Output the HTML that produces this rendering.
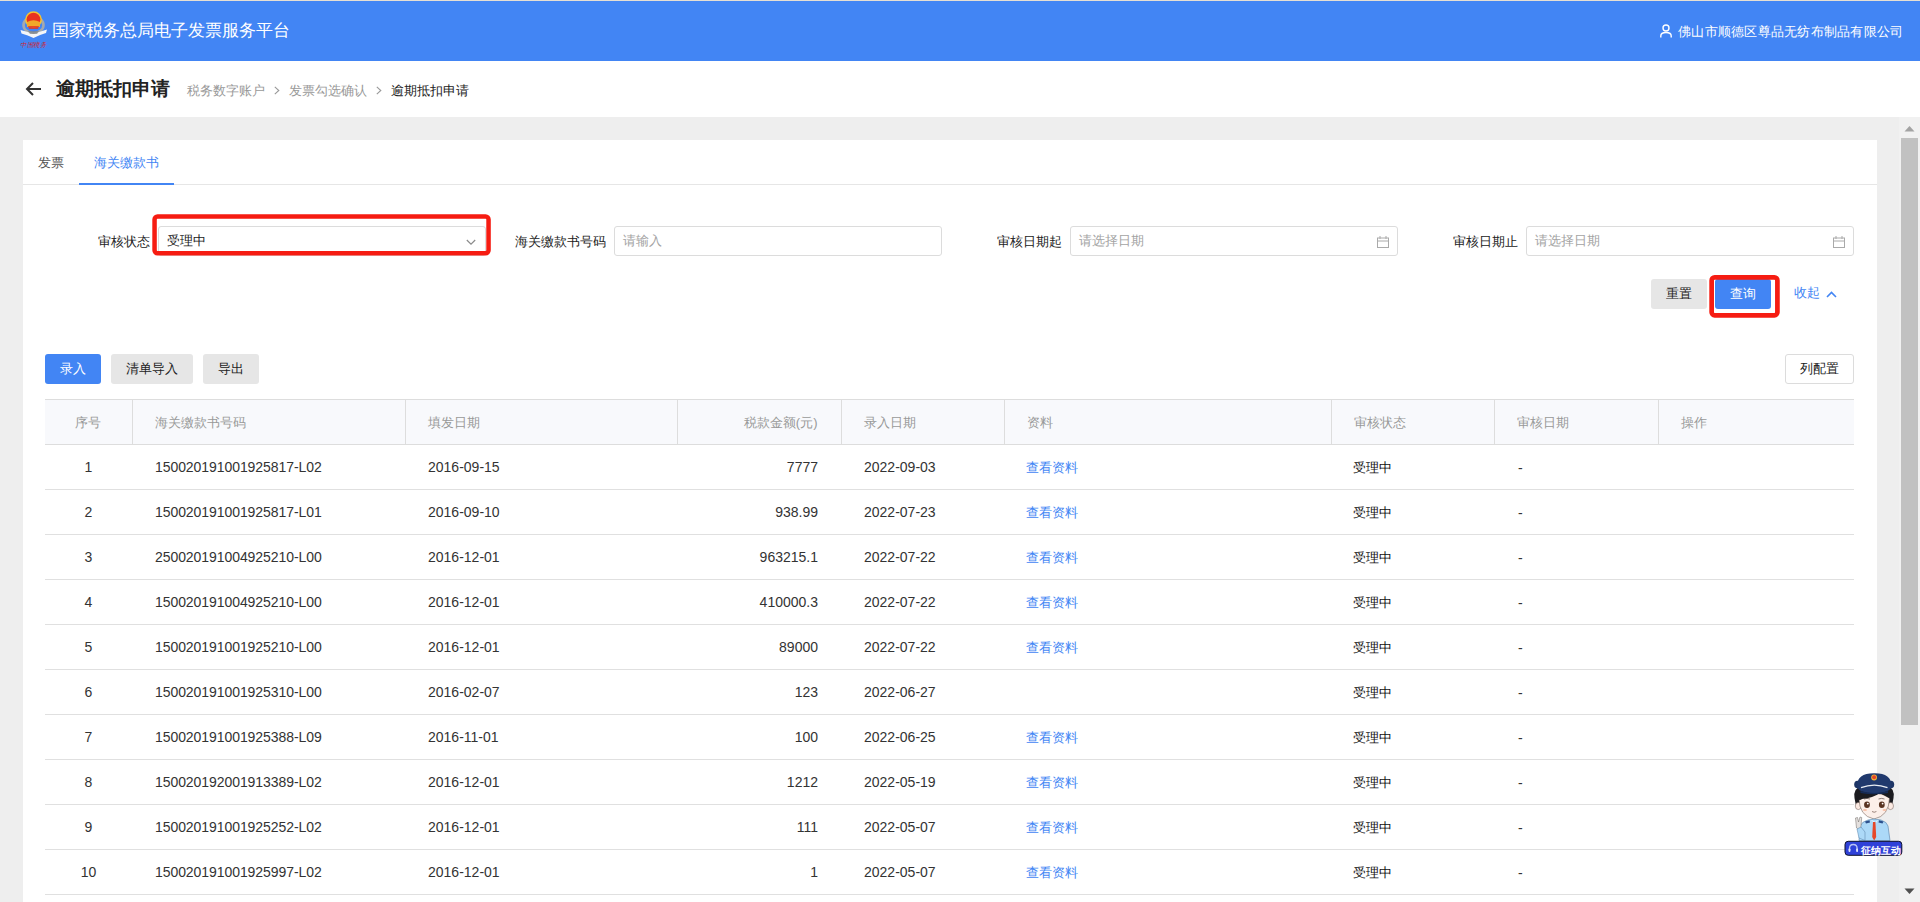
<!DOCTYPE html>
<html><head><meta charset="utf-8">
<style>
*{box-sizing:border-box;margin:0;padding:0}
html,body{width:1920px;height:902px;overflow:hidden}
body{position:relative;background:#eeeeee;font-family:"Liberation Sans",sans-serif;font-size:13px;color:#333}
.abs{position:absolute}
#topline{left:0;top:0;width:1920px;height:1px;background:#e6dfd3}
#header{left:0;top:1px;width:1920px;height:60px;background:#4285f4;color:#fff}
#logo{left:19px;top:8px;width:30px;height:40px}
#sitetitle{left:52px;top:19px;font-size:17px;line-height:22px;white-space:nowrap}
#user{left:1660px;top:22px;font-size:13px;line-height:18px;white-space:nowrap;letter-spacing:0.25px}
#crumbbar{left:0;top:61px;width:1920px;height:56px;background:#fff}
#back{left:25px;top:80px}
#pagetitle{left:56px;top:77px;font-size:19px;font-weight:bold;line-height:24px;color:#222;white-space:nowrap}
#crumbs{left:187px;top:82px;font-size:13px;line-height:18px;color:#999;white-space:nowrap}
#crumbs .sep{display:inline-block;width:24px;text-align:center;vertical-align:top;padding-top:4px;line-height:9px}
#crumbs .cur{color:#222}
#scroll{left:1899px;top:117px;width:21px;height:785px;background:#f1f1f1}
#thumb{left:1901px;top:138px;width:17px;height:587px;background:#c1c1c1}
#card{left:23px;top:140px;width:1854px;height:800px;background:#fff}
#tabs{left:23px;top:140px;width:1854px;height:45px;border-bottom:1px solid #e6e6e6}
.tab{position:absolute;top:0;height:45px;line-height:46px;padding:0 15px;font-size:13px;color:#555}
.tab.active{color:#4285f4}
.tab.active:after{content:"";position:absolute;left:0;right:0;bottom:0;height:2px;background:#4285f4}
.flabel{position:absolute;top:233px;width:120px;text-align:right;font-size:13px;line-height:18px;color:#222;white-space:nowrap}
.finput{position:absolute;top:226px;width:328px;height:30px;border:1px solid #dcdcdc;border-radius:3px;background:#fff;font-size:13px;line-height:28px;padding-left:8px;color:#a3a3a3;white-space:nowrap}
.finput.val{color:#222}
.redbox{position:absolute;border:4px solid #f5201a;border-radius:5px}
.btn{position:absolute;height:30px;line-height:30px;border-radius:3px;font-size:13px;font-weight:500;text-align:center;white-space:nowrap}
.btn.grey{background:#e6e6e6;color:#222}
.btn.blue{background:#4285f4;color:#fff}
.btn.outline{background:#fff;border:1px solid #dcdcdc;line-height:28px;color:#222}
#table{left:45px;top:399px;width:1809px;border-collapse:collapse;table-layout:fixed}
#table th{height:45px;background:#f8f9fc;color:#999;font-weight:normal;text-align:left;font-size:13px;border-top:1px solid #ddd;border-bottom:1px solid #ddd;border-left:1px solid #ddd;padding:2px 0 0 22px}
#table th:first-child{border-left:none;text-align:center;padding:2px 0 0 0}
#table td{height:45px;border-bottom:1px solid #e0e0e0;font-size:14px;color:#333;padding:0 0 0 23px;white-space:nowrap}
#table td:first-child{text-align:center;padding:0}
#table td:nth-child(2){letter-spacing:-0.07px}
#table th.r{text-align:right;padding:2px 23px 0 0}
#table td.r{text-align:right;padding:0 23px 0 0}
#table td.link{color:#4285f4;font-size:13px;padding-top:2px;padding-left:22px}
#table td.dash{padding-left:24px;padding-top:1px}
#table td.cn{color:#111;font-size:13px;padding-top:2px;padding-left:22px}
</style></head><body>
<div id="topline" class="abs"></div>
<div id="header" class="abs">
  <div id="logo" class="abs">
    <svg width="30" height="40" viewBox="0 0 30 40">
      <path d="M4.5 12 Q3 20 8 24 L21 24 Q26 20 24.5 12 Q26 22 14.5 25 Q3 22 4.5 12 Z" fill="#8f969c"/>
      <ellipse cx="14.5" cy="16" rx="10" ry="8.2" fill="none" stroke="#a4a9ad" stroke-width="2.6"/>
      <circle cx="14.5" cy="10.6" r="8.4" fill="#f4c430"/>
      <circle cx="14.5" cy="10.6" r="6.9" fill="#e8321f"/>
      <path d="M8 13 Q14.5 9.5 21 13 L21 18 L8 18 Z" fill="#f1a82a"/>
      <path d="M9 17 L20 17 L19 20 L10 20 Z" fill="#e8321f" opacity=".8"/>
      <path d="M1.5 21 Q8 22.5 14.5 25 Q21 22.5 28 20.5 L27 24 Q20 26 14.5 29 Q9 26 2.5 24.5 Z" fill="#f4f6f8"/>
      <path d="M9 22 L20 22 L18 25 L11 25 Z" fill="#7d8489" opacity=".7"/>
      <text x="14.5" y="37.5" font-size="6.5" fill="#d4202a" text-anchor="middle" font-style="italic" letter-spacing="-0.3">中国税务</text>
    </svg>
  </div>
  <div id="sitetitle" class="abs">国家税务总局电子发票服务平台</div>
  <div id="user" class="abs"><svg width="12" height="14" viewBox="0 0 12 14" style="vertical-align:-2px;margin-right:6px"><circle cx="6" cy="4" r="3" fill="none" stroke="#fff" stroke-width="1.4"/><path d="M0.8 13.5 V12 Q0.8 8.5 6 8.5 Q11.2 8.5 11.2 12 V13.5" fill="none" stroke="#fff" stroke-width="1.4"/></svg>佛山市顺德区尊品无纺布制品有限公司</div>
</div>
<div id="crumbbar" class="abs"></div>
<div id="back" class="abs"><svg width="18" height="18" viewBox="0 0 18 18"><path d="M2 9 H16 M8 3 L2 9 L8 15" fill="none" stroke="#333" stroke-width="2"/></svg></div>
<div id="pagetitle" class="abs">逾期抵扣申请</div>
<div id="crumbs" class="abs">税务数字账户<span class="sep"><svg width="6" height="9" viewBox="0 0 6 9"><path d="M0.8 0.8 L4.8 4.5 L0.8 8.2" fill="none" stroke="#999" stroke-width="1.1"/></svg></span>发票勾选确认<span class="sep"><svg width="6" height="9" viewBox="0 0 6 9"><path d="M0.8 0.8 L4.8 4.5 L0.8 8.2" fill="none" stroke="#999" stroke-width="1.1"/></svg></span><span class="cur">逾期抵扣申请</span></div>

<div id="card" class="abs"></div>
<div id="tabs" class="abs">
  <div class="tab" style="left:0">发票</div>
  <div class="tab active" style="left:56px">海关缴款书</div>
</div>

<div class="flabel" style="left:30px">审核状态</div>
<div class="finput val" style="left:158px">受理中<svg width="10" height="7" viewBox="0 0 10 7" style="position:absolute;right:9px;top:12px"><path d="M0.8 1 L5 5.2 L9.2 1" fill="none" stroke="#8a8a8a" stroke-width="1.15"/></svg></div>
<svg class="abs" style="left:140px;top:200px" width="370" height="70"><rect x="14.55" y="16.45" width="334" height="36.9" rx="3" fill="none" stroke="#f61c12" stroke-width="4.5"/></svg>

<div class="flabel" style="left:486px">海关缴款书号码</div>
<div class="finput" style="left:614px">请输入</div>

<div class="flabel" style="left:942px">审核日期起</div>
<div class="finput" style="left:1070px">请选择日期<svg width="12" height="12" viewBox="0 0 12 12" style="position:absolute;right:8px;top:9px"><rect x="0.5" y="2" width="11" height="9.5" fill="none" stroke="#aaa"/><path d="M0.5 5 H11.5 M3 0 V3 M9 0 V3" stroke="#aaa"/></svg></div>

<div class="flabel" style="left:1398px">审核日期止</div>
<div class="finput" style="left:1526px">请选择日期<svg width="12" height="12" viewBox="0 0 12 12" style="position:absolute;right:8px;top:9px"><rect x="0.5" y="2" width="11" height="9.5" fill="none" stroke="#aaa"/><path d="M0.5 5 H11.5 M3 0 V3 M9 0 V3" stroke="#aaa"/></svg></div>

<div class="btn grey" style="left:1651px;top:279px;width:56px">重置</div>
<div class="btn blue" style="left:1715px;top:279px;width:56px">查询</div>
<svg class="abs" style="left:1700px;top:265px" width="90" height="60"><rect x="11.65" y="12.4" width="65.75" height="37.9" rx="3" fill="none" stroke="#f61c12" stroke-width="4.7"/></svg>
<div class="abs" style="left:1794px;top:284px;font-size:13px;line-height:18px;color:#4285f4;white-space:nowrap">收起<svg width="11" height="7" viewBox="0 0 11 7" style="margin-left:6px;vertical-align:-1px"><path d="M1 6 L5.5 1.5 L10 6" fill="none" stroke="#4285f4" stroke-width="1.6"/></svg></div>

<div class="btn blue" style="left:45px;top:354px;width:56px">录入</div>
<div class="btn grey" style="left:111px;top:354px;width:82px">清单导入</div>
<div class="btn grey" style="left:203px;top:354px;width:56px">导出</div>
<div class="btn outline" style="left:1785px;top:354px;width:69px">列配置</div>

<table id="table" class="abs">
<colgroup><col style="width:87px"><col style="width:273px"><col style="width:272px"><col style="width:164px"><col style="width:163px"><col style="width:327px"><col style="width:163px"><col style="width:164px"><col style="width:196px"></colgroup>
<thead><tr><th>序号</th><th>海关缴款书号码</th><th>填发日期</th><th class="r">税款金额(元)</th><th>录入日期</th><th>资料</th><th>审核状态</th><th>审核日期</th><th>操作</th></tr></thead>
<tbody>
<tr><td>1</td><td>150020191001925817-L02</td><td>2016-09-15</td><td class="r">7777</td><td>2022-09-03</td><td class="link">查看资料</td><td class="cn">受理中</td><td class="dash">-</td><td></td></tr>
<tr><td>2</td><td>150020191001925817-L01</td><td>2016-09-10</td><td class="r">938.99</td><td>2022-07-23</td><td class="link">查看资料</td><td class="cn">受理中</td><td class="dash">-</td><td></td></tr>
<tr><td>3</td><td>250020191004925210-L00</td><td>2016-12-01</td><td class="r">963215.1</td><td>2022-07-22</td><td class="link">查看资料</td><td class="cn">受理中</td><td class="dash">-</td><td></td></tr>
<tr><td>4</td><td>150020191004925210-L00</td><td>2016-12-01</td><td class="r">410000.3</td><td>2022-07-22</td><td class="link">查看资料</td><td class="cn">受理中</td><td class="dash">-</td><td></td></tr>
<tr><td>5</td><td>150020191001925210-L00</td><td>2016-12-01</td><td class="r">89000</td><td>2022-07-22</td><td class="link">查看资料</td><td class="cn">受理中</td><td class="dash">-</td><td></td></tr>
<tr><td>6</td><td>150020191001925310-L00</td><td>2016-02-07</td><td class="r">123</td><td>2022-06-27</td><td class="link"></td><td class="cn">受理中</td><td class="dash">-</td><td></td></tr>
<tr><td>7</td><td>150020191001925388-L09</td><td>2016-11-01</td><td class="r">100</td><td>2022-06-25</td><td class="link">查看资料</td><td class="cn">受理中</td><td class="dash">-</td><td></td></tr>
<tr><td>8</td><td>150020192001913389-L02</td><td>2016-12-01</td><td class="r">1212</td><td>2022-05-19</td><td class="link">查看资料</td><td class="cn">受理中</td><td class="dash">-</td><td></td></tr>
<tr><td>9</td><td>150020191001925252-L02</td><td>2016-12-01</td><td class="r">111</td><td>2022-05-07</td><td class="link">查看资料</td><td class="cn">受理中</td><td class="dash">-</td><td></td></tr>
<tr><td>10</td><td>150020191001925997-L02</td><td>2016-12-01</td><td class="r">1</td><td>2022-05-07</td><td class="link">查看资料</td><td class="cn">受理中</td><td class="dash">-</td><td></td></tr>
</tbody></table>

<div id="scroll" class="abs"></div>
<div id="thumb" class="abs"></div>
<svg class="abs" style="left:1904px;top:125px" width="11" height="7" viewBox="0 0 11 7"><path d="M0.5 6.5 L5.5 1 L10.5 6.5 Z" fill="#a3a3a3"/></svg>
<svg class="abs" style="left:1904px;top:888px" width="11" height="7" viewBox="0 0 11 7"><path d="M0.5 0.5 L5.5 6 L10.5 0.5 Z" fill="#505050"/></svg>

<svg class="abs" style="left:1840px;top:768px" width="68" height="92" viewBox="0 0 68 92">
  <!-- hair back -->
  <path d="M14.5 30 Q13 20 22 18 L47 18 Q55 20 53.5 30 L52 38 L16 38 Z" fill="#1b1b1f"/>
  <!-- ears -->
  <ellipse cx="18.3" cy="38" rx="3" ry="3.6" fill="#fbe9e1" stroke="#6b5750" stroke-width=".5"/>
  <ellipse cx="50.5" cy="38" rx="3" ry="3.6" fill="#fbe9e1" stroke="#6b5750" stroke-width=".5"/>
  <!-- face -->
  <path d="M19 30 Q19 48 34 51 Q49 48 49.5 30 Q42 25 34 25 Q26 25 19 30 Z" fill="#fcefe9" stroke="#5f4c45" stroke-width=".5"/>
  <!-- bangs -->
  <path d="M17.5 31 Q22 22 34 22 Q46 22 51 31 Q44 27 40 25 Q33 30 22 31 Q20 33 17.5 31 Z" fill="#1b1b1f"/>
  <!-- hat -->
  <ellipse cx="17.4" cy="16.5" rx="3.2" ry="3.8" fill="#1d3565"/>
  <ellipse cx="51" cy="16.5" rx="3.2" ry="3.8" fill="#1d3565"/>
  <path d="M17 18 Q17 5 34.3 5.2 Q51.5 5 51.5 18 Q51 25 34.3 25.2 Q17.5 25 17 18 Z" fill="#20396d"/>
  <path d="M20.5 23 Q34.3 27 48 23 L48 25 Q34.3 27.5 20.5 25 Z" fill="#152a55"/>
  <path d="M21 19.6 Q34.3 14.5 47.5 19.6" fill="none" stroke="#e9edf3" stroke-width="1.3"/>
  <circle cx="34.1" cy="9.5" r="2.9" fill="#f0b43a"/>
  <circle cx="34.1" cy="9.3" r="2" fill="#e4462a"/>
  <!-- eyebrows -->
  <path d="M24 31 Q27 29.8 30 31" fill="none" stroke="#3b2c27" stroke-width=".6"/>
  <path d="M38.5 31 Q41.5 29.8 44.5 31" fill="none" stroke="#3b2c27" stroke-width=".6"/>
  <!-- eyes -->
  <ellipse cx="27" cy="36.7" rx="2.9" ry="3.3" fill="#5a3422"/>
  <ellipse cx="41.8" cy="36.7" rx="2.9" ry="3.3" fill="#5a3422"/>
  <circle cx="27.8" cy="35.6" r=".9" fill="#fff"/>
  <circle cx="42.6" cy="35.6" r=".9" fill="#fff"/>
  <ellipse cx="25" cy="42" rx="2" ry="1" fill="#f7c0a8"/>
  <ellipse cx="44.5" cy="42" rx="2" ry="1" fill="#f7c0a8"/>
  <path d="M32 43.5 Q34.2 45 36.4 43.5" fill="none" stroke="#5b3c33" stroke-width=".6"/>
  <!-- shirt -->
  <path d="M19 72.5 L20 58 Q22 53.5 28 52 L34 51 L41 52 Q47 54 48 58 L50 72.5 Z" fill="#acd9f8" stroke="#547ea6" stroke-width=".6"/>
  <path d="M25 53.5 L29.5 52.2 L30 54.5 L26 55.5 Z" fill="#2b4f8c"/>
  <path d="M39 52.2 L43.5 53.5 L42.5 55.5 L38.5 54.5 Z" fill="#2b4f8c"/>
  <path d="M30.5 51.5 L34.2 55 L38 51.5 L36.5 54.5 Z" fill="#e8f4fd"/>
  <path d="M33 54 L35.4 54 L36.2 69 L34.2 72.5 L32.2 69 Z" fill="#e6482a"/>
  <!-- hand -->
  <path d="M16.5 60 L15.5 50 L17.5 49.5 L18.5 54 L20 49 L21.7 49.5 L21 58 Q21 62 19 62 Z" fill="#e4e0de" stroke="#6d6663" stroke-width=".5"/>
  <path d="M17 61 L19 70 L25 72.5 L25 64 L21 59 Z" fill="#acd9f8" stroke="#547ea6" stroke-width=".5"/>
  <!-- badge -->
  <rect x="5" y="73.3" width="56.8" height="14" rx="3.2" fill="#2f41d8" stroke="#0c0f2a" stroke-width="1"/>
  <path d="M9.5 83 V80.5 Q9.5 76.5 13.3 76.5 Q17.1 76.5 17.1 80.5 V83" fill="none" stroke="#b9c2f5" stroke-width="1.4"/>
  <rect x="8.6" y="80.5" width="1.8" height="3.6" rx=".8" fill="#dfe4fb"/>
  <rect x="16.2" y="80.5" width="1.8" height="3.6" rx=".8" fill="#dfe4fb"/>
  <text x="41" y="85.6" font-size="9.6" fill="#fff" text-anchor="middle" font-weight="900" letter-spacing="0.2">征纳互动</text>
</svg>
</body></html>
